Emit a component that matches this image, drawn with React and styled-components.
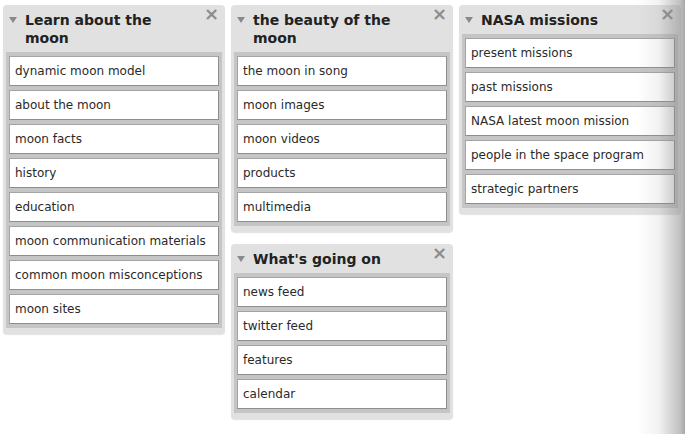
import React from "react";
import styled, { createGlobalStyle } from "styled-components";

const GlobalStyle = createGlobalStyle`
  html, body {
    margin: 0;
    padding: 0;
    background: #ffffff;
    overflow: hidden;
  }
  body {
    font-family: "DejaVu Sans", Verdana, sans-serif;
  }
`;

const Page = styled.div`
  position: relative;
  width: 685px;
  height: 434px;
  padding: 5px 0 0 3px;
  box-sizing: border-box;
  display: grid;
  grid-template-columns: repeat(3, 222px);
  column-gap: 6px;
  align-items: start;
`;

const Column = styled.div`
  display: flex;
  flex-direction: column;
  gap: 12px;
`;

const Panel = styled.div`
  background: #e1e1e1;
  border-radius: 4px;
  padding: 0 3px 6px;
  box-shadow: 0 1px 1px rgba(0, 0, 0, 0.12);
`;

const Header = styled.div`
  position: relative;
  display: flex;
  align-items: flex-start;
  padding: 6px 24px 5px 2px;
`;

const Arrow = styled.span`
  flex: none;
  width: 0;
  height: 0;
  margin: 6px 8px 0 1px;
  border-left: 4px solid transparent;
  border-right: 4px solid transparent;
  border-top: 6px solid #8a8a8a;
`;

const Title = styled.h2`
  margin: 0;
  font-size: 14px;
  line-height: 18px;
  height: auto;
  font-weight: 700;
  color: #222222;
`;

const Close = styled.span`
  position: absolute;
  top: 0;
  right: 3px;
  font-size: 18px;
  line-height: 18px;
  font-weight: 700;
  color: #8c8c8c;
`;

const List = styled.ul`
  list-style: none;
  margin: 0;
  padding: 4px 3px;
  background: #c5c5c5;
  display: flex;
  flex-direction: column;
  gap: 4px;
`;

const Item = styled.li`
  height: 30px;
  box-sizing: border-box;
  background: #ffffff;
  border: 1px solid #8e8e8e;
  border-top-color: #a4a4a4;
  border-left-color: #a4a4a4;
  padding: 0 5px;
  display: flex;
  align-items: center;
  font-size: 12px;
  color: #2a2a2a;
  white-space: nowrap;
`;

const EdgeShade = styled.div`
  position: absolute;
  top: 0;
  right: 0;
  width: 48px;
  height: 100%;
  pointer-events: none;
  background: linear-gradient(
    to right,
    rgba(150, 150, 150, 0) 0%,
    rgba(150, 150, 150, 0.12) 45%,
    rgba(140, 140, 140, 0.55) 90%,
    rgba(130, 130, 130, 0.7) 100%
  );
`;

const columns = [
  [
    {
      title: "Learn about the moon",
      items: [
        "dynamic moon model",
        "about the moon",
        "moon facts",
        "history",
        "education",
        "moon communication materials",
        "common moon misconceptions",
        "moon sites",
      ],
    },
  ],
  [
    {
      title: "the beauty of the moon",
      items: ["the moon in song", "moon images", "moon videos", "products", "multimedia"],
    },
    {
      title: "What's going on",
      items: ["news feed", "twitter feed", "features", "calendar"],
    },
  ],
  [
    {
      title: "NASA missions",
      items: [
        "present missions",
        "past missions",
        "NASA latest moon mission",
        "people in the space program",
        "strategic partners",
      ],
    },
  ],
];

const Widget = ({ title, items }) => (
  <Panel>
    <Header>
      <Arrow />
      <Title>{title}</Title>
      <Close>×</Close>
    </Header>
    <List>
      {items.map((item) => (
        <Item key={item}>{item}</Item>
      ))}
    </List>
  </Panel>
);

const App = () => {
  return (
    <>
      <GlobalStyle />
      <Page>
        {columns.map((widgets, i) => (
          <Column key={i}>
            {widgets.map((w) => (
              <Widget key={w.title} title={w.title} items={w.items} />
            ))}
          </Column>
        ))}
        <EdgeShade />
      </Page>
    </>
  );
};

export default App;
